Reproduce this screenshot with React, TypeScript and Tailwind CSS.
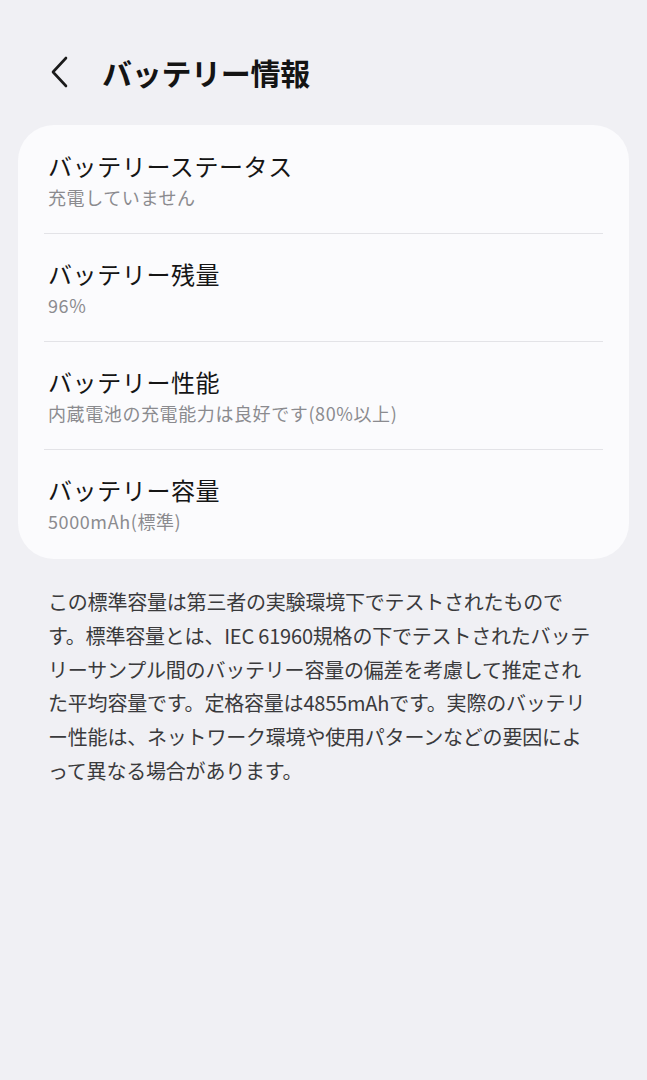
import React from 'react'

const rows = [
  { title: 'バッテリーステータス', value: '充電していません' },
  { title: 'バッテリー残量', value: '96%' },
  { title: 'バッテリー性能', value: '内蔵電池の充電能力は良好です(80%以上)' },
  { title: 'バッテリー容量', value: '5000mAh(標準)' },
]

const notes = [
  'この標準容量は第三者の実験環境下でテストされたもので',
  'す。標準容量とは、IEC 61960規格の下でテストされたバッテ',
  'リーサンプル間のバッテリー容量の偏差を考慮して推定され',
  'た平均容量です。定格容量は4855mAhです。実際のバッテリ',
  'ー性能は、ネットワーク環境や使用パターンなどの要因によ',
  'って異なる場合があります。',
]

const App = () => {
  return (
    <div
      className="min-h-[1080px] w-full bg-[#f0f0f4]"
      style={{ fontFamily: '"Noto Sans CJK JP", "Noto Sans", sans-serif' }}
    >
      <header className="flex h-[125px] items-center pl-[46px] pt-[19px]">
        <svg width="28" height="34" viewBox="0 0 28 34" fill="none">
          <path d="M20 3 L7 17 L20 31" stroke="#1a1a1a" strokeWidth="2.6" strokeLinecap="round" strokeLinejoin="round" />
        </svg>
        <h1 className="ml-[28px] text-[30px] font-bold leading-none tracking-[-0.3px] text-[#141414]">バッテリー情報</h1>
      </header>

      <div className="mx-[18px] rounded-[36px] bg-[#fbfbfd] px-[26px] pb-[2px] pt-[1px]">
        {rows.map((r, i) => (
          <div key={r.title} className={i < rows.length - 1 ? 'border-b border-[#e3e3e7]' : ''}>
            <div className="flex flex-col gap-[3px] px-1 py-6">
              <span className="text-[24px] leading-[32px] tracking-[0.6px] text-[#151515]">{r.title}</span>
              <span className="text-[18px] leading-[24px] tracking-[0.6px] text-[#8b8b8f]">{r.value}</span>
            </div>
          </div>
        ))}
      </div>

      <div className="mt-[26px] px-[48px] text-[20px] leading-[33.8px] tracking-[-0.2px] text-[#3a3a3c]">
        {notes.map((l) => (
          <div key={l} className="whitespace-nowrap">{l}</div>
        ))}
      </div>
    </div>
  )
}

export default App
